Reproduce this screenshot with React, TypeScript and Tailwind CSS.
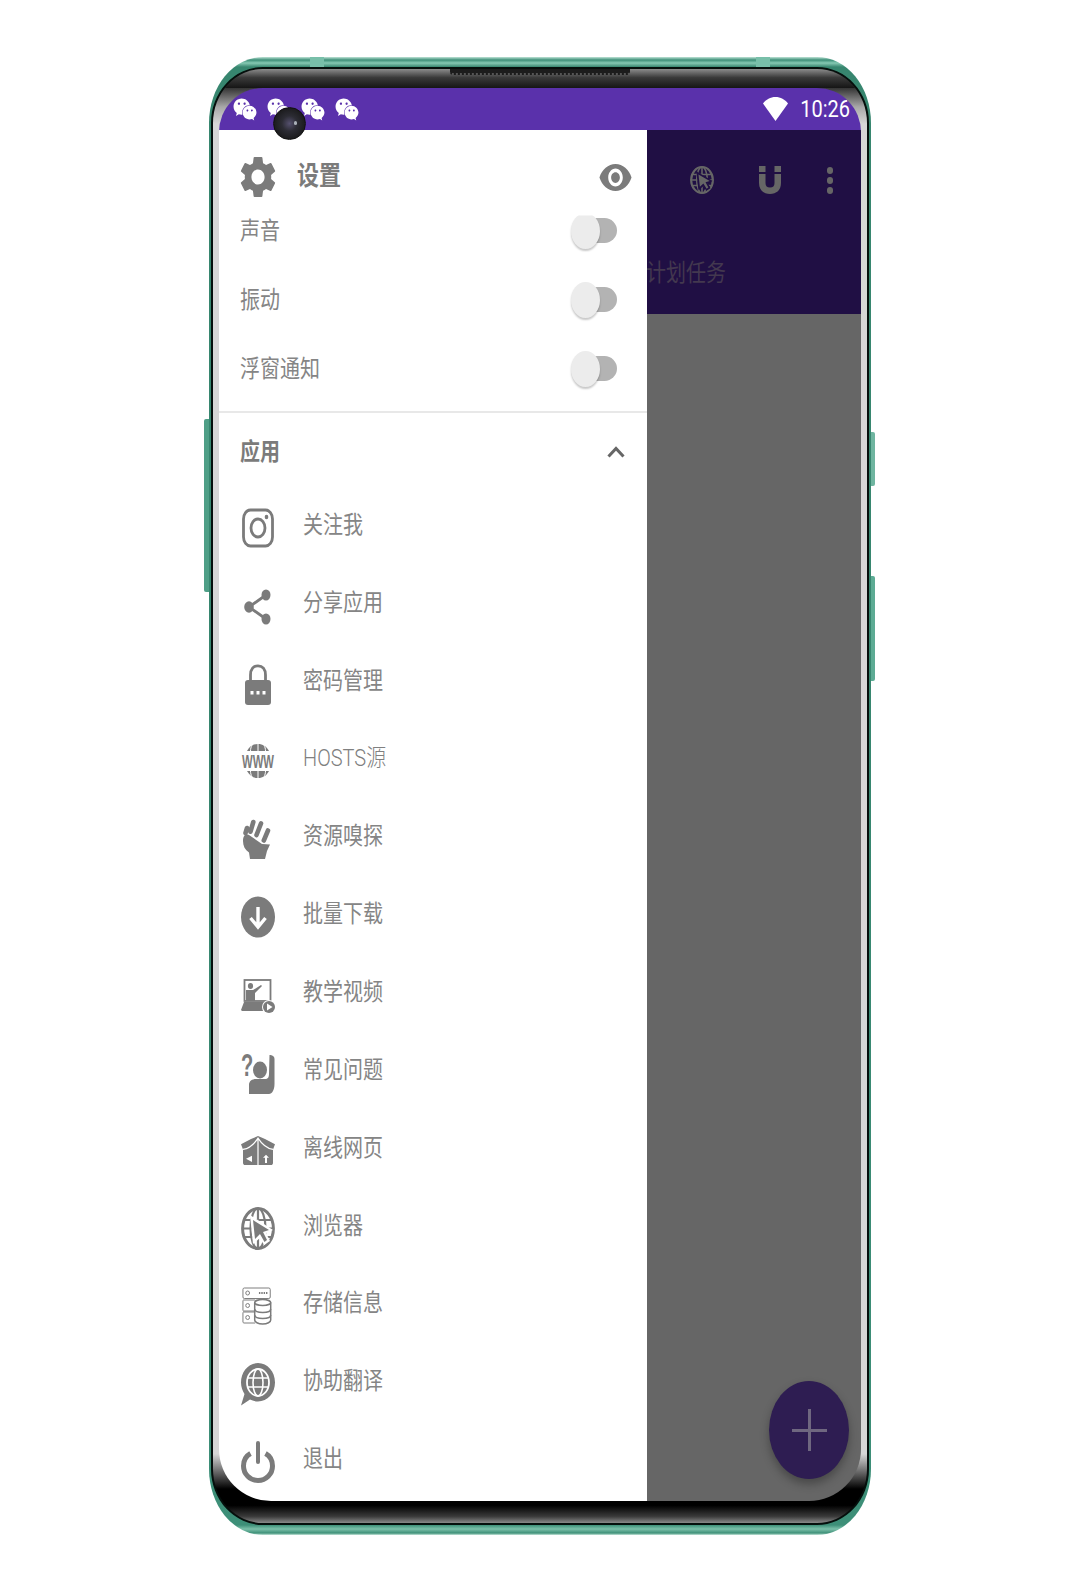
import React from 'react';
import { FaWeixin } from 'react-icons/fa';
import { MdSettings, MdVisibility } from 'react-icons/md';

const cjk = "font-['Roboto','Noto_Sans_CJK_SC',sans-serif]";

type IconProps = { className?: string };

const Box: React.FC<{ w?: number; h?: number; className?: string; children: React.ReactNode }> = ({ w = 34, h = 40, className = 'w-[34px] h-[40px]', children }) => (
    <svg viewBox={`0 0 ${w} ${h}`} preserveAspectRatio="none" className={`${className} shrink-0 overflow-visible`} fill="currentColor">
        {children}
    </svg>
);

const InstagramIcon = () => (
    <Box>
        <rect x="2.5" y="2" width="29" height="36" rx="7" ry="9" fill="none" stroke="currentColor" strokeWidth="2.8" />
        <ellipse cx="17" cy="20" rx="7" ry="9" fill="none" stroke="currentColor" strokeWidth="2.8" />
        <ellipse cx="25.5" cy="9" rx="1.8" ry="2.2" />
    </Box>
);

const ShareIcon = () => (
    <Box>
        <path d="M25 9L8 21L25 33" fill="none" stroke="currentColor" strokeWidth="2.8" />
        <ellipse cx="25" cy="9" rx="4.5" ry="5.5" />
        <ellipse cx="8" cy="21" rx="4.8" ry="5.8" />
        <ellipse cx="25" cy="33" rx="4.5" ry="5.5" />
    </Box>
);

const LockIcon = () => (
    <Box>
        <path d="M9.5 18V11C9.5 5 12.5 1.8 17 1.8C21.5 1.8 24.5 5 24.5 11V18" fill="none" stroke="currentColor" strokeWidth="2.8" />
        <rect x="4" y="16" width="26" height="25" rx="3" />
        <rect x="9.5" y="27" width="3" height="3.5" fill="#fff" />
        <rect x="15.5" y="27" width="3" height="3.5" fill="#fff" />
        <rect x="21.5" y="27" width="3" height="3.5" fill="#fff" />
    </Box>
);

const WwwIcon = () => (
    <Box>
        <path d="M6 10C9 5 12 3 17 3C22 3 25 5 28 10Z" />
        <path d="M6 30C9 35 12 37 17 37C22 37 25 35 28 30Z" />
        <path d="M17 2V10M17 30V38M11 4C10 6 9.5 8 9.5 10M23 4C24 6 24.5 8 24.5 10M11 36C10 34 9.5 32 9.5 30M23 36C24 34 24.5 32 24.5 30" fill="none" stroke="#fff" strokeWidth="1" />
        <text transform="translate(17 26.5) scale(1 1.3)" textAnchor="middle" textLength="32" lengthAdjust="spacingAndGlyphs" fontFamily="Liberation Sans" fontWeight="700" fontSize="14">WWW</text>
    </Box>
);

const FistIcon = () => (
    <Box>
        <path d="M12.3 3L9.5 12.7M20 4.5L15.5 16M27 11.5L22.8 21.5M6 9L4.5 14" fill="none" stroke="currentColor" strokeWidth="4.6" strokeLinecap="round" />
        <path d="M2 22C2 16 5 14 8 16L21 25L29 25.5L26 32L24 40H9L8 33.5C4 31 2 27 2 22Z" />
    </Box>
);

const DownloadIcon = () => (
    <Box>
        <ellipse cx="17" cy="20" rx="17" ry="20.5" />
        <path d="M17 10V29M9.5 21L17 30L24.5 21" fill="none" stroke="#fff" strokeWidth="3.4" />
    </Box>
);

const TutorialIcon = () => (
    <Box>
        <rect x="3.5" y="5" width="26" height="21" fill="none" stroke="currentColor" strokeWidth="1.8" />
        <ellipse cx="9.5" cy="11" rx="2.6" ry="3" />
        <path d="M5 15H12L20 10L21 11L14 18V26H5Z" />
        <path d="M0 35L3 27H28V36H1Z" />
        <circle cx="28" cy="32" r="7" fill="#fff" />
        <circle cx="28" cy="32" r="6" />
        <path d="M26 28.5L31.5 32L26 35.5Z" fill="#fff" />
    </Box>
);

const QuestionIcon = () => (
    <Box h={42} className="w-[34px] h-[42px]">
        <text transform="translate(0 24) scale(1 1.6)" fontFamily="Liberation Sans" fontWeight="700" fontSize="20">?</text>
        <ellipse cx="19" cy="18" rx="7" ry="8.5" />
        <path d="M28.5 3C31 3 33.5 4 33.5 7V32C33.5 38 31 42 28 42H8V33C8 29 11 27 15 27H24C27 27 28 25 28 22Z" />
    </Box>
);

const ParcelIcon = () => (
    <Box h={28} className="w-[34px] h-[29px]">
        <path d="M0 8L10 3L17 0L24 3L34 8L32 13V26C32 27 31 28 30 28H4C3 28 2 27 2 26V13Z" />
        <path d="M2 13C8 12 13 8 17 2C21 8 26 12 32 13M17 2V28" fill="none" stroke="#fff" strokeWidth="1.2" />
        <path d="M11 19V25L5 22Z" fill="#fff" />
        <path d="M25 18L28 21H26V26H24V21H22Z" fill="#fff" />
    </Box>
);

const GlobeCursorIcon: React.FC<IconProps & { halo?: string }> = ({ className = 'w-[34px] h-[43px]', halo = '#fff' }) => (
    <Box h={43} className={className}>
        <ellipse cx="17" cy="21.5" rx="15.4" ry="20" fill="none" stroke="currentColor" strokeWidth="3" />
        <ellipse cx="17" cy="21.5" rx="7.5" ry="20" fill="none" stroke="currentColor" strokeWidth="2.2" />
        <path d="M17 1V42M2 13H32M1 21.5H33M2 30H32" fill="none" stroke="currentColor" strokeWidth="2.2" />
        <path d="M9 8L32 23L25 26L29 34L23 38L19 31L12 37Z" fill={halo} />
        <path d="M12 13L28 23L22 25L26 33L23.5 35L19 27L14 32Z" />
    </Box>
);

const StorageIcon = () => (
    <Box h={38} className="w-[32px] h-[38px]">
        <g fill="none" stroke="currentColor" strokeWidth="1">
            <rect x="1" y="1" width="29" height="10.5" rx="1.5" />
            <path d="M14 13H1.5C1 13 1 13.5 1 14V23C1 23.5 1 24 1.5 24H14M14 25H1.5C1 25 1 25.5 1 26V35C1 35.5 1.5 36 2 36H14" />
            <circle cx="6" cy="6" r="2" />
            <circle cx="6" cy="18.5" r="2" />
            <circle cx="6" cy="30.5" r="2" />
            <path d="M18 6H27" strokeDasharray="1.5 1" strokeWidth="2" />
        </g>
        <g fill="none" stroke="currentColor" strokeWidth="1.6">
            <ellipse cx="22" cy="15.5" rx="8.5" ry="3" />
            <path d="M13.5 15.5V33C13.5 35 17 37 22 37C27 37 30.5 35 30.5 33V15.5" />
            <path d="M13.5 22C13.5 24 17 25.5 22 25.5C27 25.5 30.5 24 30.5 22M13.5 28C13.5 30 17 31.5 22 31.5C27 31.5 30.5 30 30.5 28" />
        </g>
    </Box>
);

const TranslateIcon = () => (
    <Box h={43} className="w-[34px] h-[43px]">
        <path d="M17 0C26.5 0 34 8.5 34 19.5C34 30 26.5 38.5 17 38.5C14 38.5 11 37.5 9 36.5L0 42.5L3.5 31C1.5 28 0 24 0 19.5C0 8.5 7.5 0 17 0Z" />
        <ellipse cx="17" cy="19.5" rx="11" ry="13.5" fill="none" stroke="#fff" strokeWidth="1.8" />
        <ellipse cx="17" cy="19.5" rx="5" ry="13.5" fill="none" stroke="#fff" strokeWidth="1.6" />
        <path d="M6.5 15H27.5M6.5 24H27.5" fill="none" stroke="#fff" strokeWidth="1.6" />
    </Box>
);

const PowerIcon = () => (
    <Box h={42} className="w-[34px] h-[42px]">
        <path d="M9.5 12.5C5 15 2.5 20 2.5 25C2.5 33 9 39.5 17 39.5C25 39.5 31.5 33 31.5 25C31.5 20 29 15 24.5 12.5" fill="none" stroke="currentColor" strokeWidth="5" />
        <path d="M17 2V21" fill="none" stroke="currentColor" strokeWidth="4" strokeLinecap="round" />
    </Box>
);

const MagnetIcon = () => (
    <Box w={22} h={28} className="w-[22px] h-[28px]">
        <rect x="0" y="0" width="6.5" height="6" />
        <rect x="15.5" y="0" width="6.5" height="6" />
        <path d="M0 8H6.5V17C6.5 20 8 21.5 11 21.5C14 21.5 15.5 20 15.5 17V8H22V17C22 24 17.5 28 11 28C4.5 28 0 24 0 17Z" />
    </Box>
);

const WifiIcon = () => (
    <Box w={25} h={24} className="w-[25px] h-[24px]">
        <path d="M0 6.5C3 2.5 7.5 0 12.5 0C17.5 0 22 2.5 25 6.5L12.5 24Z" />
    </Box>
);

const Label: React.FC<{ children: React.ReactNode; className?: string }> = ({ children, className = '' }) => (
    <span className={`inline-block scale-y-[1.2] ${className}`}>{children}</span>
);

const Toggle: React.FC<{ clipped?: boolean }> = ({ clipped }) => (
    <div className="relative w-[46px] h-[36px]">
        <div className="absolute right-0 top-[5px] w-[32px] h-[25px] rounded-r-full bg-[#b3b3b3]" />
        <div className={`absolute left-0 top-0 w-[29px] h-[36px] rounded-[50%] bg-[#ececec] shadow-[0_2px_2px_rgba(0,0,0,0.22)] ${clipped ? '[clip-path:inset(3px_-4px_-4px_-4px)]' : ''}`} />
    </div>
);

const settings = ['声音', '振动', '浮窗通知'];

const menu: { label: string; icon: React.ReactNode; light?: boolean }[] = [
    { label: '关注我', icon: <InstagramIcon /> },
    { label: '分享应用', icon: <ShareIcon /> },
    { label: '密码管理', icon: <LockIcon /> },
    { label: 'HOSTS源', icon: <WwwIcon />, light: true },
    { label: '资源嗅探', icon: <FistIcon /> },
    { label: '批量下载', icon: <DownloadIcon /> },
    { label: '教学视频', icon: <TutorialIcon /> },
    { label: '常见问题', icon: <QuestionIcon /> },
    { label: '离线网页', icon: <ParcelIcon /> },
    { label: '浏览器', icon: <GlobeCursorIcon /> },
    { label: '存储信息', icon: <StorageIcon /> },
    { label: '协助翻译', icon: <TranslateIcon /> },
    { label: '退出', icon: <PowerIcon /> },
];

const Drawer = () => (
    <div className="w-[428px] h-full bg-white overflow-hidden text-[#7b7b7b] shrink-0">
        <div className="h-[66px] pt-[28px] pl-[22px] pr-[15px] flex items-center">
            <MdSettings className="w-[44px] h-[50px] -mx-[5px] shrink-0" preserveAspectRatio="none" />
            <Label className="ml-[22px] text-[22px] font-bold leading-none">设置</Label>
            <MdVisibility className="ml-auto w-[35px] h-[43px] -mr-[1px]" preserveAspectRatio="none" />
        </div>
        {settings.map((item, i) => (
            <div key={item} className="h-[69px] pl-[21px] pr-[30px] flex items-center justify-between">
                <Label className="text-[20px] leading-none text-[#858585]">{item}</Label>
                <Toggle clipped={i === 0} />
            </div>
        ))}
        <div className="mt-[8px] h-[2px] bg-[#e8e8e8]" />
        <div className="h-[73px] pt-[5px] pl-[21px] pr-[22px] flex items-center justify-between">
            <Label className="text-[20px] font-bold leading-none">应用</Label>
            <svg viewBox="0 0 18 12" className="w-[18px] h-[12px]" fill="none" stroke="#666" strokeWidth="3">
                <path d="M1.5 10.5L9 2.5L16.5 10.5" />
            </svg>
        </div>
        {menu.map((item) => (
            <div key={item.label} className="h-[77.85px] pl-[22px] flex items-center">
                <div className="w-[34px] mt-[6px] flex justify-center shrink-0">{item.icon}</div>
                <Label className={`ml-[28px] text-[20px] leading-none ${item.light ? 'font-light text-[#808080]' : 'text-[#858585]'}`}>{item.label}</Label>
            </div>
        ))}
    </div>
);

const Scrim = () => (
    <div className="relative flex-1 h-full bg-[#666666] flex flex-col">
        <div className="h-[184px] bg-[#200f44] text-[#666666] pt-[36px] overflow-hidden">
            <div className="flex items-center pl-[43px]">
                <GlobeCursorIcon className="w-[24px] h-[28px]" halo="#200f44" />
                <div className="ml-[45px]"><MagnetIcon /></div>
                <div className="ml-[46px] flex flex-col gap-[3px]">
                    <div className="w-[6px] h-[7px] rounded-full bg-[#666666]" />
                    <div className="w-[6px] h-[7px] rounded-full bg-[#666666]" />
                    <div className="w-[6px] h-[7px] rounded-full bg-[#666666]" />
                </div>
            </div>
            <div className="mt-[67px] -ml-[1px] text-[20px] leading-[24px] text-[#43384f]">
                <Label>计划任务</Label>
            </div>
        </div>
        <div className="absolute right-[12px] bottom-[22px] w-[80px] h-[98px] rounded-[50%] bg-[#2e1d52] shadow-[0_5px_10px_rgba(0,0,0,0.3)] flex items-center justify-center">
            <svg viewBox="0 0 35 42" className="w-[35px] h-[42px]" fill="#6f6780">
                <rect x="16" y="0" width="3" height="42" />
                <rect x="0" y="20" width="35" height="3" />
            </svg>
        </div>
    </div>
);

export default function App() {
    return (
        <div className={`w-[1080px] h-[1593px] bg-white overflow-hidden pt-[57px] flex justify-center ${cjk}`}>
            <div className="relative w-[662px] h-[1478px] p-[2px] pt-[10px] pb-[10px] rounded-[54px/66px] bg-[linear-gradient(180deg,#bfe3d6_0px,#3d8f78_3px,#86c9b3_6px,#37866f_10px,#37866f_50%,#3d8f78_1468px,#7cc0aa_1472px,#3f9179_1476px,#c5e6da_1478px)]">
                {/* antenna lines on the frame */}
                <div className="absolute left-[101px] top-0 w-[14px] h-[10px] bg-[#78bfa9]" />
                <div className="absolute left-[547px] top-0 w-[14px] h-[10px] bg-[#78bfa9]" />
                {/* side buttons */}
                <div className="absolute -left-[5px] top-[362px] w-[5px] h-[173px] bg-[#4f9f87] rounded-l-[2px]" />
                <div className="absolute -right-[4px] top-[375px] w-[4px] h-[54px] bg-[#6fb5a0] rounded-r-[2px]" />
                <div className="absolute -right-[4px] top-[519px] w-[4px] h-[105px] bg-[#5dab94] rounded-r-[2px]" />

                <div className="relative h-full rounded-[52px/56px] overflow-hidden border-2 border-[#050f0c] bg-[linear-gradient(180deg,#1c1c1c_15px,#a8a8a8_38px,#d6d6d6_55px,#d6d6d6_1385px,#000_1420px)] flex flex-col">
                    <div className="h-[19px] shrink-0 bg-[linear-gradient(180deg,#8c8c8c,#3a3a3a_45%,#151515)]">
                        <div className="ml-[237px] w-[180px] h-[6px] rounded-b-[3px] bg-[#1c1c1c] border-b-2 border-dotted border-[#555]" />
                    </div>
                    <div className="flex-1 min-h-0 px-[6px]">
                        <div className="h-full rounded-t-[44px] rounded-b-[52px] overflow-hidden flex flex-col">
                            <div className="h-[42px] shrink-0 bg-[#5a31ab] text-white flex items-center pl-[14px] pr-[11px]">
                                <div className="flex gap-[10px]">
                                    <FaWeixin className="w-[24px] h-[25px]" preserveAspectRatio="none" />
                                    <FaWeixin className="w-[24px] h-[25px]" preserveAspectRatio="none" />
                                    <FaWeixin className="w-[24px] h-[25px]" preserveAspectRatio="none" />
                                    <FaWeixin className="w-[24px] h-[25px]" preserveAspectRatio="none" />
                                </div>
                                <div className="ml-auto flex items-center gap-[12px]">
                                    <WifiIcon />
                                    <Label className="text-[20px] leading-none">10:26</Label>
                                </div>
                            </div>
                            <div className="flex-1 min-h-0 flex">
                                <Drawer />
                                <Scrim />
                            </div>
                        </div>
                    </div>
                    <div className="h-[22px] shrink-0 bg-[linear-gradient(180deg,#000_20%,#3a3a3a_70%,#8a8a8a)]" />
                </div>

                {/* front camera */}
                <div className="absolute left-[64px] top-[50px] w-[33px] h-[33px] rounded-full bg-[radial-gradient(circle_at_50%_50%,#55506e_0,#2c2c34_35%,#1c1c1e_70%)] border border-[#111]">
                    <div className="absolute left-[20px] top-[13px] w-[3px] h-[4px] rounded-full bg-[#aab0b8]" />
                </div>
            </div>
        </div>
    );
}
